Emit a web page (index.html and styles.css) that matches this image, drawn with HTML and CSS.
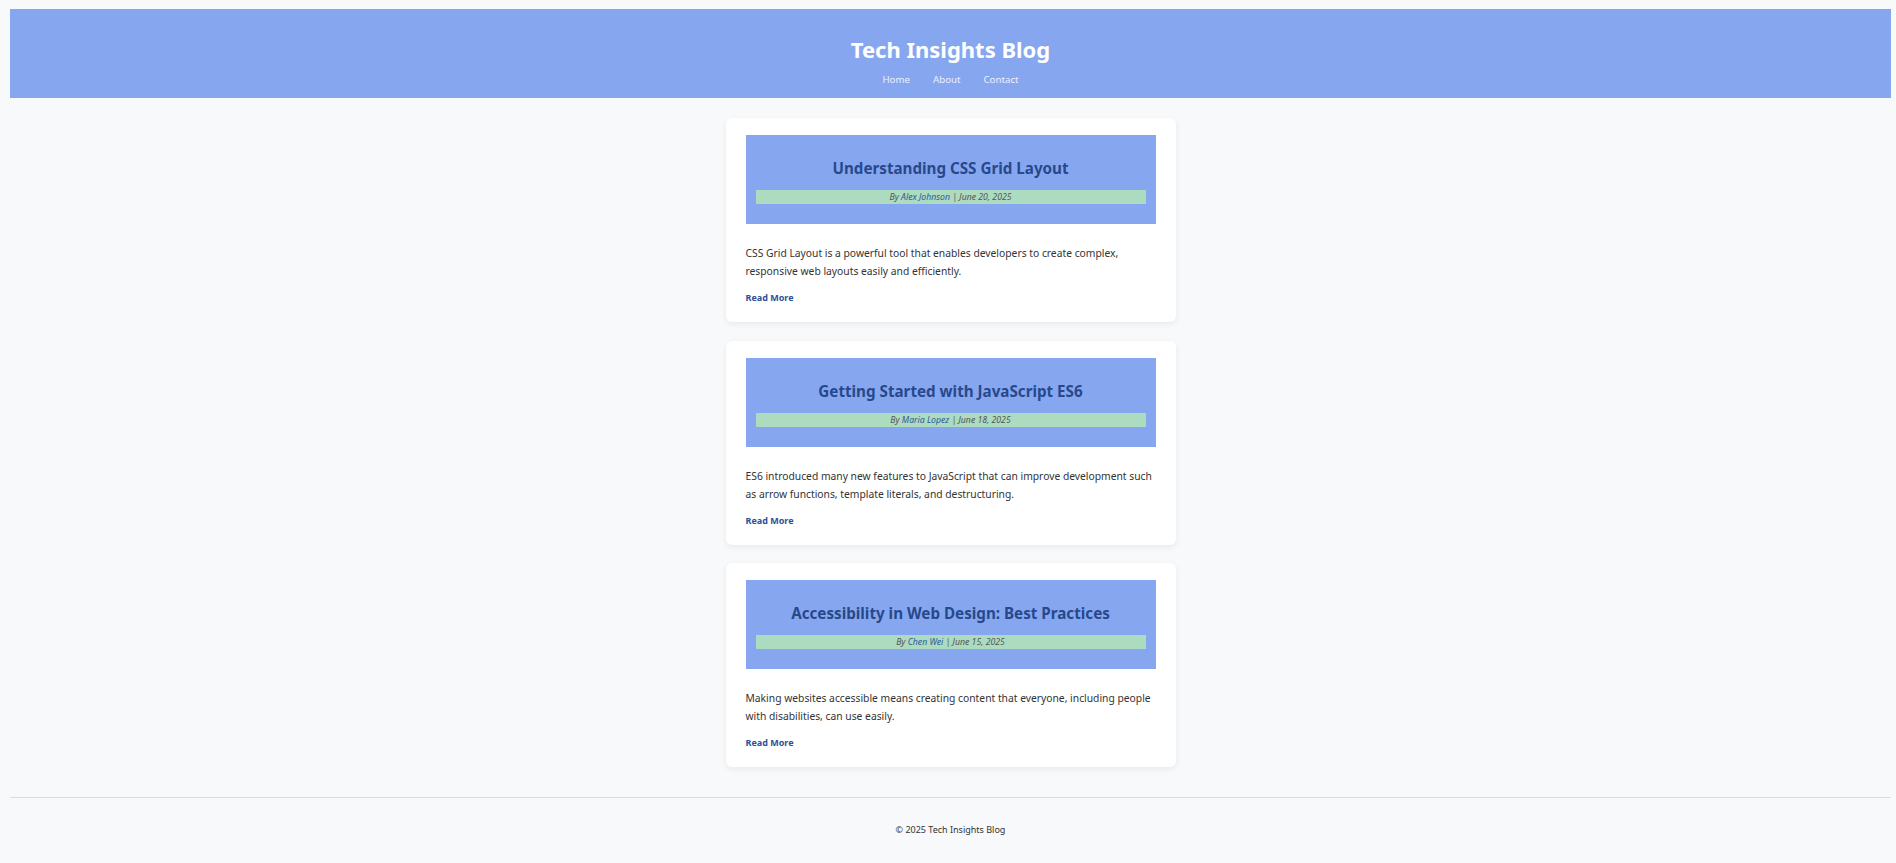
FILE: index.html
```html
<!DOCTYPE html>
<html lang="en">
<head>
<meta charset="utf-8">
<title>Tech Insights Blog</title>
<link rel="stylesheet" href="styles.css">
</head>
<body>
<header class="site-header">
  <h1 class="site-title">Tech Insights Blog</h1>
  <nav class="site-nav">
    <a href="#">Home</a>
    <a href="#">About</a>
    <a href="#">Contact</a>
  </nav>
</header>
<main class="posts">
  <article class="post">
    <div class="post-head">
      <h2 class="post-title">Understanding CSS Grid Layout</h2>
      <p class="post-meta">By <span class="author">Alex Johnson</span> | June 20, 2025</p>
    </div>
    <p class="post-text">CSS Grid Layout is a powerful tool that enables developers to create complex, responsive web layouts easily and efficiently.</p>
    <a class="read-more" href="#">Read More</a>
  </article>
  <article class="post">
    <div class="post-head">
      <h2 class="post-title">Getting Started with JavaScript ES6</h2>
      <p class="post-meta">By <span class="author">Maria Lopez</span> | June 18, 2025</p>
    </div>
    <p class="post-text">ES6 introduced many new features to JavaScript that can improve development such as arrow functions, template literals, and destructuring.</p>
    <a class="read-more" href="#">Read More</a>
  </article>
  <article class="post">
    <div class="post-head">
      <h2 class="post-title">Accessibility in Web Design: Best Practices</h2>
      <p class="post-meta">By <span class="author">Chen Wei</span> | June 15, 2025</p>
    </div>
    <p class="post-text">Making websites accessible means creating content that everyone, including people with disabilities, can use easily.</p>
    <a class="read-more" href="#">Read More</a>
  </article>
</main>
<footer class="site-footer">
  <p>&copy; 2025 Tech Insights Blog</p>
</footer>
</body>
</html>
```
FILE: styles.css
```css
* { box-sizing: border-box; }

body {
  margin: 9px 5px 0 10px;
  background: #f8f9fa;
  font-family: "Noto Sans", "Open Sans", sans-serif;
  color: #333;
}

.site-header {
  background: #86a7f0;
  height: 89px;
  display: flex;
  flex-direction: column;
  align-items: center;
  padding-top: 26px;
}

.site-title {
  margin: 0;
  font-size: 22px;
  line-height: 28px;
  font-weight: 700;
  color: #fff;
}

.site-nav {
  display: flex;
  gap: 23px;
  margin-top: 10px;
}

.site-nav a {
  color: #eaf0ff;
  text-decoration: none;
  font-size: 9.7px;
  line-height: 14px;
}

.posts {
  display: flex;
  flex-direction: column;
  align-items: center;
  gap: 18.5px;
  padding-top: 20px;
}

.post {
  width: 450px;
  background: #fff;
  border-radius: 6px;
  box-shadow: 0 2px 6px rgba(0, 0, 0, 0.07);
  padding: 17px 20px 17px;
}

.post-head {
  background: #86a7f0;
  padding: 23px 10px 20px;
  text-align: center;
}

.post-title {
  margin: 0 0 12px;
  font-size: 15.2px;
  line-height: 20px;
  font-weight: 700;
  color: #27498b;
}

.post-meta {
  margin: 0;
  background: #acdbc0;
  font-size: 8.7px;
  line-height: 14px;
  font-style: italic;
  color: #555;
}

.author { color: #2d5a9c; }

.post-text {
  margin: 20px 0 11px;
  font-size: 10.3px;
  line-height: 18px;
  color: #333;
}

.read-more {
  display: block;
  font-size: 9px;
  line-height: 14px;
  font-weight: 700;
  color: #2c5096;
  text-decoration: none;
}

.site-footer {
  margin-top: 30px;
  border-top: 1px solid #dcdcdc;
  text-align: center;
  padding-top: 25px;
}

.site-footer p {
  margin: 0;
  font-size: 9px;
  line-height: 14px;
  color: #333;
}
```
